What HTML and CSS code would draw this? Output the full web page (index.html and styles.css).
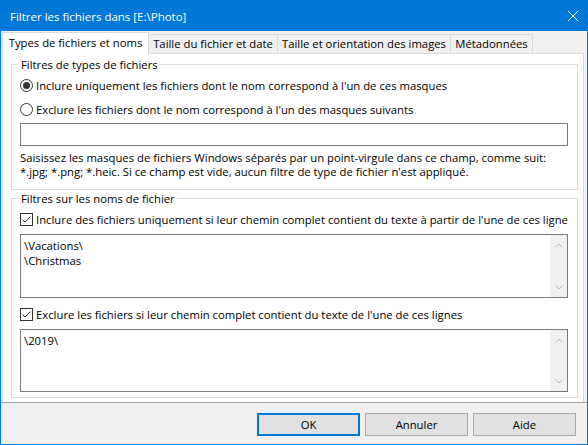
FILE: index.html
```
<!DOCTYPE html>
<html lang="fr">
<head>
<meta charset="utf-8">
<title>Filtrer les fichiers</title>
<link rel="stylesheet" href="styles.css">
</head>
<body>
<div class="window">
  <div class="titlebar">
    <span class="title">Filtrer les fichiers dans [E:\Photo]</span>
    <svg class="close" width="10" height="10" viewBox="0 0 10 10"><path d="M0 0L10 10M10 0L0 10" stroke="#fff" stroke-width="1" fill="none"/></svg>
  </div>
  <div class="tabs">
    <div class="tab active t1">Types de fichiers et noms</div>
    <div class="tab t2">Taille du fichier et date</div>
    <div class="tab t3">Taille et orientation des images</div>
    <div class="tab t4">Métadonnées</div>
  </div>
  <div class="panel">
    <fieldset class="group g1">
      <legend>Filtres de types de fichiers</legend>
      <div class="opt">
        <svg class="mark" width="13" height="13" viewBox="0 0 13 13"><circle cx="6.5" cy="6.5" r="6" fill="#fff" stroke="#333"/><circle cx="6.5" cy="6.5" r="3.5" fill="#333"/></svg>
        <span class="label">Inclure uniquement les fichiers dont le nom correspond à l'un de ces masques</span>
      </div>
      <div class="opt second">
        <svg class="mark" width="13" height="13" viewBox="0 0 13 13"><circle cx="6.5" cy="6.5" r="6" fill="#fff" stroke="#333"/></svg>
        <span class="label">Exclure les fichiers dont le nom correspond à l'un des masques suivants</span>
      </div>
      <div class="input"></div>
      <p class="hint">Saisissez les masques de fichiers Windows séparés par un point-virgule dans ce champ, comme suit:<br>*.jpg; *.png; *.heic. Si ce champ est vide, aucun filtre de type de fichier n'est appliqué.</p>
    </fieldset>
    <fieldset class="group g2">
      <legend>Filtres sur les noms de fichier</legend>
      <div class="opt">
        <svg class="mark" width="13" height="13" viewBox="0 0 13 13"><rect x="0.5" y="0.5" width="12" height="12" fill="#fff" stroke="#333"/><path d="M2.5 6.5L5 9L10.5 3.5" fill="none" stroke="#333" stroke-width="1"/></svg>
        <span class="label">Inclure des fichiers uniquement si leur chemin complet contient du texte à partir de l'une de ces ligne</span>
      </div>
      <div class="textarea ta1">
        <div class="ta-text">\Vacations\<br>\Christmas</div>
        <div class="scroll">
          <svg width="8" height="5" viewBox="0 0 8 5"><path d="M0.5 4.5L4 1L7.5 4.5" fill="none" stroke="#bdbdbd"/></svg>
          <svg width="8" height="5" viewBox="0 0 8 5"><path d="M0.5 0.5L4 4L7.5 0.5" fill="none" stroke="#bdbdbd"/></svg>
        </div>
      </div>
      <div class="opt third">
        <svg class="mark" width="13" height="13" viewBox="0 0 13 13"><rect x="0.5" y="0.5" width="12" height="12" fill="#fff" stroke="#333"/><path d="M2.5 6.5L5 9L10.5 3.5" fill="none" stroke="#333" stroke-width="1"/></svg>
        <span class="label">Exclure les fichiers si leur chemin complet contient du texte de l'une de ces lignes</span>
      </div>
      <div class="textarea ta2">
        <div class="ta-text">\2019\</div>
        <div class="scroll">
          <svg width="8" height="5" viewBox="0 0 8 5"><path d="M0.5 4.5L4 1L7.5 4.5" fill="none" stroke="#bdbdbd"/></svg>
          <svg width="8" height="5" viewBox="0 0 8 5"><path d="M0.5 0.5L4 4L7.5 0.5" fill="none" stroke="#bdbdbd"/></svg>
        </div>
      </div>
    </fieldset>
  </div>
  <div class="separator"></div>
  <div class="buttons">
    <button class="btn default">OK</button>
    <button class="btn">Annuler</button>
    <button class="btn">Aide</button>
  </div>
</div>
</body>
</html>
```

FILE: styles.css
```
html, body {
  margin: 0;
  padding: 0;
  background: #f0f0f0;
}

body {
  font-family: "Open Sans", "Noto Sans", sans-serif;
  font-size: 11.3px;
  line-height: 16px;
  color: #000;
}

.window {
  width: 588px;
  height: 445px;
  box-sizing: border-box;
  border: 1px solid #0078d7;
  background: #f0f0f0;
  display: flex;
  flex-direction: column;
  overflow: hidden;
}

.titlebar {
  height: 30px;
  flex: none;
  background: #0078d7;
  color: #fff;
  display: flex;
  align-items: flex-start;
  justify-content: space-between;
  box-sizing: border-box;
  padding: 8px 9px 0 9px;
}

.title {
  font-size: 11.5px;
  line-height: 16px;
}

.close {
  margin-top: 2px;
  display: block;
}

.tabs {
  display: flex;
  align-items: flex-end;
  height: 22px;
  flex: none;
  margin: 1px 0 0 1px;
}

.tab {
  box-sizing: border-box;
  height: 20px;
  padding-top: 1px;
  border: 1px solid #d9d9d9;
  border-bottom: none;
  background: #f0f0f0;
  text-align: center;
  white-space: nowrap;
  margin-left: -1px;
}

.tab.active {
  height: 22px;
  padding-top: 2px;
  background: #fff;
  margin-left: 0;
  position: relative;
  z-index: 1;
}

.t1 { width: 147px; }
.t2 { width: 130px; }
.t3 { width: 174px; }
.t4 { width: 83px; }

.panel {
  flex: none;
  margin: -1px 3px 0 1px;
  border: 1px solid #d9d9d9;
  border-bottom: none;
  background: #fff;
  padding: 2px 5px 4px 8px;
}

.group {
  margin: 0;
  min-width: 0;
  border: 1px solid #dcdcdc;
  padding: 5px 9px 10px 8px;
}

.g2 {
  padding-bottom: 5px;
}

.group legend {
  padding: 0 2px 0 3px;
  margin-left: -2px;
  line-height: 17px;
}

.opt {
  display: flex;
  align-items: flex-start;
  height: 16px;
  white-space: nowrap;
  overflow: hidden;
}

.opt .mark {
  flex: none;
  display: block;
  margin: 1px 3px 0 0;
}

.opt.second {
  margin-top: 8px;
}

.opt.third {
  margin-top: 9px;
}

.input {
  margin-top: 5px;
  height: 23px;
  box-sizing: border-box;
  border: 1px solid #7a7a7a;
  background: #fff;
}

.hint {
  margin: 5px 0 0 0;
  line-height: 14px;
  white-space: nowrap;
}

.textarea {
  display: flex;
  box-sizing: border-box;
  border: 1px solid #7a7a7a;
  background: #fff;
}

.ta1 {
  margin-top: 6px;
  height: 64px;
}

.ta2 {
  margin-top: 6px;
  height: 63px;
}

.ta-text {
  flex: 1;
  padding: 3px 0 0 3px;
  line-height: 15px;
}

.scroll {
  flex: none;
  width: 17px;
  background: #f0f0f0;
  display: flex;
  flex-direction: column;
  align-items: center;
  justify-content: space-between;
  padding: 8px 0 7px 0;
}

.scroll svg {
  display: block;
}

.separator {
  flex: none;
  height: 1px;
  background: #a0a0a0;
}

.buttons {
  flex: none;
  display: flex;
  justify-content: flex-end;
  gap: 5px;
  margin-top: 10px;
  padding-right: 11px;
}

.btn {
  width: 103px;
  height: 23px;
  box-sizing: border-box;
  margin: 0;
  padding: 0;
  border: 1px solid #adadad;
  background: #e1e1e1;
  font-family: inherit;
  font-size: 11.3px;
  line-height: 16px;
  color: #000;
}

.btn.default {
  border: 2px solid #0078d7;
}
```
